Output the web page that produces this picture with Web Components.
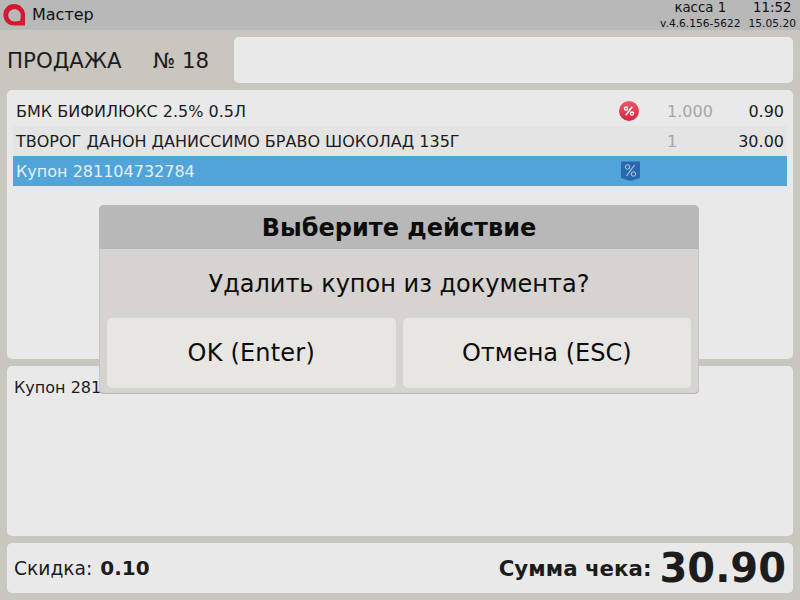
<!DOCTYPE html>
<html lang="ru">
<head>
<meta charset="utf-8">
<title>Мастер</title>
<style>
  html, body { margin: 0; height: 100%; }
  body { width: 800px; height: 600px; overflow: hidden; font-family: "DejaVu Sans", sans-serif; color: #1c1c1c; }
</style>
</head>
<body>
<pos-app></pos-app>

<script>
// Small helper, every element just sets its markup in an open shadow root
class ShadowEl extends HTMLElement {
  constructor() {
    super();
    this.attachShadow({ mode: 'open' });
    this.shadowRoot.innerHTML = this.markup();
  }
}

class PosHeader extends ShadowEl {
  markup() {
    return `
      <style>
        :host { display: flex; align-items: flex-start; height: 30px; background: #b8b8b8; color: #111; }
        svg { margin: 4px 0 0 3px; flex-shrink: 0; }
        .title { font-size: 16px; line-height: 18px; margin: 6px 0 0 7px; flex-grow: 1; }
        .col { display: flex; flex-direction: column; align-items: center; }
        .big { font-size: 13.33px; line-height: 16px; }
        .small { font-size: 10.67px; line-height: 13px; margin-top: 1px; }
        .kassa { margin-right: 8px; }
        .clock { margin-right: 4px; }
      </style>
      <svg width="22" height="22" viewBox="0 0 22 22">
        <path fill-rule="evenodd" fill="#d01c2e" d="M11 0C5 0 .4 4.8 .4 10.8C.4 17 5 21.6 11 21.6H22V10.8C22 4.8 17 0 11 0ZM11.4 5.2C15 5.2 17.8 7.8 17.8 11C17.8 13 17.6 15 17.2 16.8C15.4 17.2 13.4 17.4 11.4 17.4C8 17.4 5.2 14.7 5.2 11.3C5.2 7.9 8 5.2 11.4 5.2Z"/>
      </svg>
      <div class="title">Мастер</div>
      <div class="col kassa"><span class="big">касса 1</span><span class="small">v.4.6.156-5622</span></div>
      <div class="col clock"><span class="big">11:52</span><span class="small">15.05.20</span></div>
    `;
  }
}

class PosTitle extends ShadowEl {
  markup() {
    return `
      <style>
        :host { display: flex; align-items: center; height: 46px; font-size: 21.33px; }
        .name { width: 146px; }
        .num { width: 81px; }
        .field { flex-grow: 1; height: 46px; background: #e9e9e9; border-radius: 5px; }
      </style>
      <span class="name">ПРОДАЖА</span>
      <span class="num">№ 18</span>
      <div class="field"></div>
    `;
  }
}

class PosPanel extends ShadowEl {
  markup() {
    return `
      <style>
        :host { display: block; background: #e9e9e9; border-radius: 5px; box-sizing: border-box; }
      </style>
      <slot></slot>
    `;
  }
}

class PosRow extends ShadowEl {
  markup() {
    return `
      <style>
        :host { display: grid; grid-template-columns: 596px 34px 40px 1fr; align-items: center; height: 30px; font-size: 16px; padding: 0 3px; }
        :host([shade]) { background: #e4e4e4; }
        :host([selected]) { background: #50a4da; color: #e6f0f8; }
        .name { white-space: nowrap; }
        .icon { display: flex; justify-content: center; }
        .qty { color: #a6a6a6; margin-left: 21px; white-space: nowrap; }
        .sum { text-align: right; }
      </style>
      <span class="name"></span>
      <span class="icon"><slot name="icon"></slot></span>
      <span class="qty"></span>
      <span class="sum"></span>
    `;
  }
  connectedCallback() {
    const root = this.shadowRoot;
    root.querySelector('.name').textContent = this.getAttribute('name');
    root.querySelector('.qty').textContent = this.getAttribute('qty') || '';
    root.querySelector('.sum').textContent = this.getAttribute('sum') || '';
  }
}

class PosDialog extends ShadowEl {
  markup() {
    return `
      <style>
        :host { position: absolute; left: 99px; top: 205px; width: 600px; height: 189px; background: #d6d3d0; border-radius: 5px; overflow: hidden; color: #0c0c0c; box-shadow: inset 0 -1px 0 #b4b4b8, inset 1px 0 0 #c4c4c4, inset -1px 0 0 #c4c4c4; }
        .head { height: 44px; padding-top: 1px; box-sizing: border-box; background: #b8b8b8; display: flex; align-items: center; justify-content: center; font-size: 24px; font-weight: bold; }
        .msg { height: 69px; display: flex; align-items: center; justify-content: center; font-size: 24px; }
        .btns { display: flex; gap: 7px; padding: 0 8px; }
        .btn { flex: 1 1 0; height: 70px; background: #e7e6e3; border-radius: 5px; display: flex; align-items: center; justify-content: center; font-size: 24px; font-kerning: none; }
        .ok { letter-spacing: .2px; }
      </style>
      <div class="head">Выберите действие</div>
      <div class="msg">Удалить купон из документа?</div>
      <div class="btns">
        <div class="btn ok">OK (Enter)</div>
        <div class="btn">Отмена (ESC)</div>
      </div>
    `;
  }
}

class PosFooter extends ShadowEl {
  markup() {
    return `
      <style>
        :host { display: flex; align-items: center; height: 50px; background: #e9e9e9; border-radius: 5px; padding: 0 7px; color: #1c1c1c; }
        .label { font-size: 18.67px; }
        .disc { font-size: 20px; font-weight: bold; margin-left: 8px; flex-grow: 1; }
        .total-label { font-size: 21.33px; font-weight: bold; margin-right: 8px; }
        .total { font-size: 40px; font-weight: bold; }
      </style>
      <span class="label">Скидка:</span>
      <span class="disc">0.10</span>
      <span class="total-label">Сумма чека:</span>
      <span class="total">30.90</span>
    `;
  }
}

class PosApp extends ShadowEl {
  markup() {
    return `
      <style>
        :host { display: block; position: relative; width: 800px; height: 600px; background: #c9c6c0; }
        .main { display: flex; flex-direction: column; gap: 7px; padding: 7px 7px 0; }
        .list { height: 269px; padding: 6px; }
        .details { height: 170px; padding: 12px 7px; font-size: 16px; line-height: 20px; }
        svg { display: block; }
        .coupon { margin-left: 2px; }
      </style>
      <pos-header></pos-header>
      <div class="main">
        <pos-title></pos-title>
        <pos-panel class="list">
          <pos-row name="БМК БИФИЛЮКС 2.5% 0.5Л" qty="1.000" sum="0.90">
            <svg slot="icon" width="20" height="20" viewBox="0 0 20 20">
              <defs><linearGradient id="red" x1="0" y1="0" x2="0" y2="1"><stop offset="0" stop-color="#e8586c"/><stop offset="1" stop-color="#d8243f"/></linearGradient></defs>
              <circle cx="10" cy="10" r="10" fill="url(#red)"/>
              <path d="M13.2 5.8L6.8 14.2" stroke="#fff" stroke-width="1.5" fill="none"/>
              <circle cx="7" cy="7.4" r="1.6" fill="none" stroke="#fff" stroke-width="1.3"/>
              <circle cx="13" cy="12.6" r="1.6" fill="none" stroke="#fff" stroke-width="1.3"/>
            </svg>
          </pos-row>
          <pos-row shade name="ТВОРОГ ДАНОН ДАНИССИМО БРАВО ШОКОЛАД 135Г" qty="1" sum="30.00"></pos-row>
          <pos-row selected name="Купон 281104732784">
            <svg class="coupon" slot="icon" width="19" height="20" viewBox="0 0 19 20">
              <path d="M0 0.5H19V17L9.5 20L0 17Z" fill="#2a68ac"/>
              <path d="M13.5 4L5.5 15" stroke="#b4cce6" stroke-width="1.1" fill="none"/>
              <circle cx="6.6" cy="6" r="2.2" fill="none" stroke="#b4cce6" stroke-width="1"/>
              <circle cx="12.4" cy="13" r="2.2" fill="none" stroke="#b4cce6" stroke-width="1"/>
            </svg>
          </pos-row>
        </pos-panel>
        <pos-panel class="details">Купон 281104732784</pos-panel>
        <pos-footer></pos-footer>
      </div>
      <pos-dialog></pos-dialog>
    `;
  }
}

customElements.define('pos-header', PosHeader);
customElements.define('pos-title', PosTitle);
customElements.define('pos-panel', PosPanel);
customElements.define('pos-row', PosRow);
customElements.define('pos-dialog', PosDialog);
customElements.define('pos-footer', PosFooter);
customElements.define('pos-app', PosApp);
</script>
</body>
</html>
